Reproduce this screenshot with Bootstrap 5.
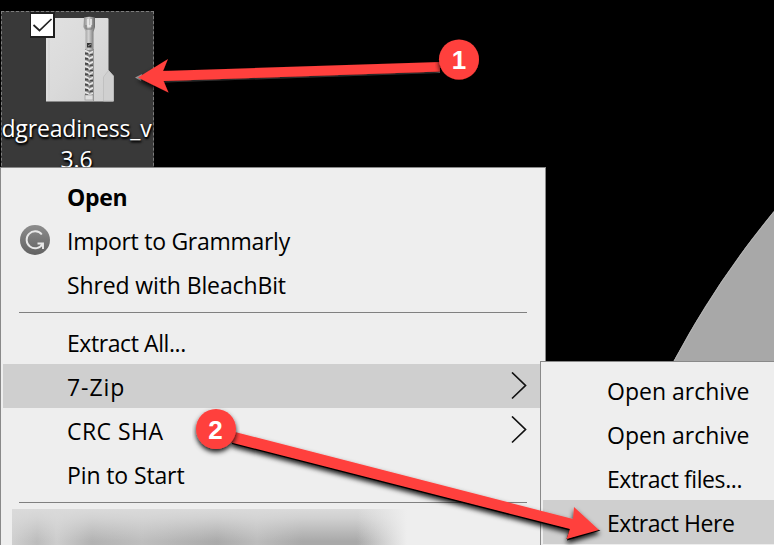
<!DOCTYPE html>
<html lang="en">
<head>
<meta charset="utf-8">
<meta name="viewport" content="width=device-width, initial-scale=1">
<title>Extract Here</title>
<link href="https://cdn.jsdelivr.net/npm/bootstrap@5.3.0/dist/css/bootstrap.min.css" rel="stylesheet">
<style>
body{width:774px;height:545px;background:#000;font-family:"Open Sans","Noto Sans",sans-serif;color:#000}
.desktop{width:774px;height:545px}
.moon{left:0;top:0}
.file-tile{left:1px;top:11px;width:153px;height:170px;background:#393939;border:1px dashed #7d7d7d}
.file-tile svg{left:28px;top:0}
.file-name{left:-11px;top:101px;width:171px;font-size:23px;line-height:31px;letter-spacing:-.15px;color:#fff;text-shadow:1px 2px 2px #000,0 1px 3px #000}
.ctx{background:#eee;border:1px solid #898989;font-size:23px}
.ctx-main{left:0;top:167px;width:546px;height:390px;padding:6px 2px 0}
.ctx-sub{left:540px;top:361px;width:250px;height:200px;padding:6px 2px 0}
.ctx-row{height:44px;line-height:44px;padding-top:1px;padding-left:64px;padding-right:16px;white-space:nowrap}
.ctx-row.active-row{background:#cfcfcf}
.ctx-row .glyph{width:30px;height:30px;margin-left:-47px;margin-right:17px;margin-top:-2px}
.chev{margin-top:7px}
.tight-1{letter-spacing:-.12px}
.tight-2{letter-spacing:-.28px}
.tight-3{letter-spacing:-.42px}
.wide-1{letter-spacing:.45px}
.wide-2{letter-spacing:.95px}
.rule{height:1px;background:#808080;margin:6px 16px 7px}
.smudge{height:36px;margin:-1px 110px 0 9px;background:
 linear-gradient(90deg,transparent 345px,#eee 395px),
 linear-gradient(#dadada,#dadadacc 25%,transparent 90%),
 linear-gradient(90deg,#cfcfcf,#bcbcbc 25px,#cdcdcd 45px,#b2b2b2 80px,#bebebe 130px,#aaa 205px,#bcbcbc 245px,#a9a9a9 290px,#a9a9a9 345px,#bbb)}
</style>
<script src="https://cdn.jsdelivr.net/npm/bootstrap@5.3.0/dist/js/bootstrap.bundle.min.js"></script>
</head>
<body class="m-0 overflow-hidden">
<main class="desktop position-relative overflow-hidden">
<svg class="moon position-absolute" width="774" height="545"><path d="M774 211Q716 281 673 362V545H774Z" fill="#a8a8a8"/><path d="M774 211.500Q716.500 281.500 673.500 362" fill="none" stroke="#b5b5b5"/></svg>

<section class="file-tile position-absolute">
<svg class="position-absolute" width="90" height="100" viewBox="30 12 90 100">
<defs>
<linearGradient id="folder" x1="0" y1="0" x2="1" y2="1"><stop offset="0" stop-color="#e1e1e1"/><stop offset=".5" stop-color="#dadada"/><stop offset="1" stop-color="#cfcfcf"/></linearGradient>
<linearGradient id="metal"><stop offset="0" stop-color="#8d8d8d"/><stop offset=".45" stop-color="#d2d2d2"/><stop offset="1" stop-color="#666"/></linearGradient>
<pattern id="teeth" width="8" height="5.200" patternUnits="userSpaceOnUse" x="85" y="50"><rect width="8" height="5.200" fill="#858585"/><path d="M0 .5L4 2.500M4 3.500L8 1.500" stroke="#eee" stroke-width="1.700"/><path d="M0 3.500H3M5 5H8" stroke="#333" stroke-width="1.200"/></pattern>
</defs>
<path d="M46 18H107Q108.500 18 108.500 19V70L113.500 76V101.500H46Z" fill="url(#folder)"/>
<path d="M49 20V101" stroke="#cbcbcb" stroke-width=".7"/>
<path d="M103.500 101V77L108.500 70.500L113.500 76V101Z" fill="#d0d0d0" stroke="#bdbdbd" stroke-width=".8"/>
<rect x="85" y="49" width="8" height="46" fill="url(#teeth)"/><path d="M93.500 49V101" stroke="#999"/>
<path d="M84 17.500Q89.500 16 95 17.500V27L93.500 32V50H85.500V31L83.500 27Z" fill="url(#metal)"/>
<path d="M88 19V26H91V19" fill="none" stroke="#eee" stroke-width="1.500"/><path d="M86 25V29H92V25" fill="none" stroke="#777"/>
<rect x="87" y="43" width="4.500" height="4.500" fill="#333"/><path d="M88 46L91 44" stroke="#999"/>
<rect x="85" y="95" width="8" height="5" fill="#dedede" stroke="#999" stroke-width=".7"/>
<rect x="30" y="13" width="24" height="24" fill="#fff" stroke="#1f1f1f" stroke-width="2"/>
<path d="M33.500 25L39.500 30.500L51.500 19" fill="none" stroke="#222" stroke-width="1.700"/>
</svg>
<div class="file-name position-absolute text-center">dgreadiness_v<br>3.6</div>
</section>

<nav class="ctx ctx-main position-absolute">
<div class="ctx-row fw-bold tight-2">Open</div>
<div class="ctx-row d-flex align-items-center"><svg class="glyph flex-shrink-0" viewBox="0 0 30 30"><defs><linearGradient id="g" x2="0" y2="1"><stop stop-color="#8d8d8d"/><stop offset="1" stop-color="#626262"/></linearGradient></defs><circle cx="15" cy="15" r="15" fill="url(#g)"/><path d="M21.800 9.500A8.500 8.500 0 1 0 22.500 19M17.500 18.500H23V24" fill="none" stroke="#e9e9e9" stroke-width="1.900"/></svg><span class="tight-2">Import to Grammarly</span></div>
<div class="ctx-row tight-1">Shred with BleachBit</div>
<div class="rule"></div>
<div class="ctx-row tight-3">Extract All...</div>
<div class="ctx-row active-row d-flex justify-content-between"><span class="wide-2">7-Zip</span><svg width="16" height="28" class="chev"><path d="M1 .5L14.500 13.500L1 26.500" fill="none" stroke="#111" stroke-width="1.700"/></svg></div>
<div class="ctx-row d-flex justify-content-between"><span class="wide-1">CRC SHA</span><svg width="16" height="28" class="chev"><path d="M1 .5L14.500 13.500L1 26.500" fill="none" stroke="#111" stroke-width="1.700"/></svg></div>
<div class="ctx-row tight-1">Pin to Start</div>
<div class="rule"></div>
<div class="smudge"></div>
</nav>

<nav class="ctx ctx-sub position-absolute">
<div class="ctx-row">Open archive</div>
<div class="ctx-row">Open archive</div>
<div class="ctx-row tight-3">Extract files...</div>
<div class="ctx-row active-row tight-3">Extract Here</div>
</nav>

<svg class="position-absolute top-0 start-0" width="774" height="545" font-family="Liberation Sans, Arial, sans-serif" font-size="26" font-weight="700" text-anchor="middle">
<defs><filter id="sh" x="-10%" y="-20%" width="120%" height="150%"><feDropShadow dx="0" dy="3" stdDeviation="2.500" flood-color="#000" flood-opacity=".9"/></filter></defs>
<path d="M135 77.500L142 74L141 81ZM164 81L440 71.500V73L164 82.500Z" fill="#999"/>
<path d="M138 77.500L168 59L163 71L440 62V71.500L163.500 81L168.500 92.500Z" fill="#ff403d" filter="url(#sh)"/>
<g filter="url(#sh)"><path d="M232 442L570 528.500L566.500 539L596 529L600.500 530.500L567 540.500L570 530.500L232 444Z" fill="#000"/><path d="M235 432L573 519L574 507L599 530L566.500 539L570 529L231 442.500Z" fill="#ff403d"/></g>
<circle cx="459" cy="59.500" r="20" fill="#ff403d" filter="url(#sh)"/>
<circle cx="216" cy="429" r="20" fill="#ff403d" filter="url(#sh)"/>
<text x="459" y="69" fill="#fff">1</text><text x="215.500" y="438.500" fill="#fff">2</text>
</svg>
</main>
</body>
</html>
